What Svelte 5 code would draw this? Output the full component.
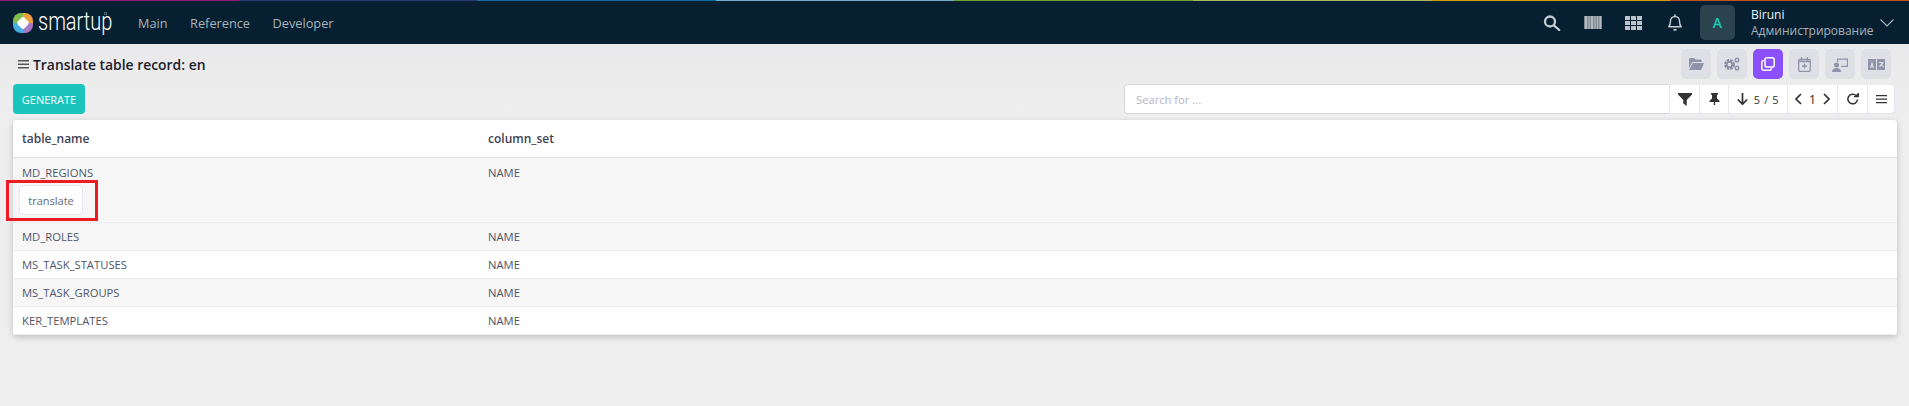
<script>
  const rows = [
    { t: 'MD_REGIONS', c: 'NAME', open: true, gray: true },
    { t: 'MD_ROLES', c: 'NAME', open: false, gray: true },
    { t: 'MS_TASK_STATUSES', c: 'NAME', open: false, gray: false },
    { t: 'MS_TASK_GROUPS', c: 'NAME', open: false, gray: true },
    { t: 'KER_TEMPLATES', c: 'NAME', open: false, gray: false }
  ];
</script>

<div class="page">
  <div class="rainbow"></div>
  <header class="nav">
    <div class="brand">
      <svg width="20" height="20" viewBox="0 0 20 20">
        <defs><clipPath id="squircle"><rect width="20" height="20" rx="8"/></clipPath></defs>
        <g clip-path="url(#squircle)">
          <path d="M0 0h10v10H0z" fill="#84bd4a"/>
          <path d="M10 0h10v10H10z" fill="#eea13a"/>
          <path d="M10 10h10v10H10z" fill="#a578c4"/>
          <path d="M0 10h10v10H0z" fill="#45aee3"/>
        </g>
        <rect x="5.200" y="5.200" width="9.600" height="9.600" rx="2.500" transform="rotate(45 10 10)" fill="#fff"/>
      </svg>
      <span class="wordmark">smartup</span>
      <svg class="reg" width="3" height="3" viewBox="0 0 3 3" fill="none" stroke="#aab2b9" stroke-width=".6"><circle cx="1.500" cy="1.500" r="1.200"/></svg>
    </div>
    <nav class="menu"><span>Main</span><span>Reference</span><span>Developer</span></nav>
    <div class="right">
      <svg class="ic i1" width="18" height="16" viewBox="0 0 18 16" fill="none" stroke="#c5ccd2" stroke-width="2.300"><circle cx="7" cy="6.500" r="5"/><path d="M10.800 10.300l5.400 4.700" stroke-linecap="round"/></svg>
      <svg class="ic i2" width="18" height="13" viewBox="0 0 18 13"><rect width="18" height="13" fill="#7f8a92"/><path fill="#b4bbc1" d="M1 0h2v13H1zM4.500 0h1v13h-1zM7 0h2v13H7zM10.500 0h1v13h-1zM13 0h1v13h-1zM15.500 0h1.500v13h-1.500z"/></svg>
      <svg class="ic i3" width="17" height="14" viewBox="0 0 17 14" fill="#bcc3c9"><path d="M0 0h5v4H0zM6 0h5v4H6zM12 0h5v4h-5zM0 5h5v4H0zM6 5h5v4H6zM12 5h5v4h-5zM0 10h5v4H0zM6 10h5v4H6zM12 10h5v4h-5z"/></svg>
      <svg class="ic i4" width="14" height="17" viewBox="0 0 14 17" fill="none" stroke="#c5ccd2" stroke-width="1.400"><path d="M.8 12.800c1.200-1.500 1.700-3 1.700-5.800a4.500 4.500 0 0 1 9 0c0 2.800.5 4.300 1.700 5.800z" stroke-linejoin="round"/><path d="M5.500 15.800h3" stroke-width="1.800"/><path d="M7 .2v2"/></svg>
      <div class="avatar">A</div>
      <div class="user"><div class="uname">Biruni</div><div class="urole">Администрирование</div></div>
      <svg class="chev" width="14" height="8" viewBox="0 0 14 8" fill="none" stroke="#aab2b9" stroke-width="1.100"><path d="M.5.500L7 7l6.500-6.500"/></svg>
    </div>
  </header>

  <main class="content">
    <div class="titlebar">
      <div class="title">
        <svg width="11" height="9" viewBox="0 0 11 9" fill="#555"><path d="M0 0h11v1.500H0zM0 3.500h11V5H0zM0 7h11v1.500H0z"/></svg>
        <span>Translate table record: en</span>
      </div>
      <div class="tools">
        <button class="tool" aria-label="folder"><svg width="15" height="12" viewBox="0 0 15 12" fill="#9094aa"><path d="M0 1.500C0 .7.600 0 1.300 0H5l1.500 1.500h5c.7 0 1.200.5 1.200 1.200V4H3.300L0 10z"/><path d="M3.800 5H15l-2.800 7H0z"/></svg></button>
        <button class="tool" aria-label="settings"><svg width="16" height="14" viewBox="0 0 16 14" fill="#9094aa"><circle cx="5.500" cy="7.500" r="3.800" fill="none" stroke="#8b8fa6" stroke-width="3.200" stroke-dasharray="2.200 .8"/><circle cx="5.500" cy="7.500" r="2.800" fill="none" stroke="#8b8fa6" stroke-width="1.600"/><circle cx="13" cy="3" r="1.800" fill="none" stroke="#9094aa" stroke-width="1.500"/><circle cx="13" cy="11" r="1.800" fill="none" stroke="#9094aa" stroke-width="1.500"/></svg></button>
        <button class="tool active" aria-label="copy"><svg width="14" height="14" viewBox="0 0 14 14" fill="none" stroke="#fff" stroke-width="1.500"><rect x="4" y=".8" width="9.200" height="9.200" rx="1.800"/><path d="M2.800 3.500A2 2 0 0 0 .8 5.500v5.700a2 2 0 0 0 2 2h5.700a2 2 0 0 0 2-2"/></svg></button>
        <button class="tool" aria-label="calendar"><svg width="13" height="15" viewBox="0 0 13 15" fill="none" stroke="#9094aa" stroke-width="1.300"><rect x=".7" y="2.500" width="11.600" height="11.800" rx="1"/><path d="M3.500 0v4M9.500 0v4M.7 4.500h11.600M6.500 6.500v5M4 9h5" /></svg></button>
        <button class="tool" aria-label="transfer"><svg width="17" height="15" viewBox="0 0 17 15" fill="#9094aa"><path d="M5 1.500h11v8.500H9V8.800h5.800V2.700H6.200V5H5z"/><circle cx="4.500" cy="8" r="2.500"/><path d="M0 15c0-3 2-4 4.500-4S9 12 9 15z"/></svg></button>
        <button class="tool" aria-label="translate"><svg width="17" height="11" viewBox="0 0 17 11" fill="#9094aa"><path fill-rule="evenodd" d="M0 0h8v11H0zM4 2L2 9h1.200l.3-1.300h1L4.800 9H6zM3.800 6.500h.4L4 5.200z"/><path fill-rule="evenodd" d="M9 0h8v11H9zM11 3v1h2.500l-2.500 3.500 .7.700 1.800-1.800 1.800 1.800.7-.7-2-2 1.500-1.500V3z"/></svg></button>
      </div>
    </div>

    <div class="actions">
      <button class="generate">GENERATE</button>
      <div class="search-wrap">
        <input class="search" placeholder="Search for ..." />
        <div class="bar">
          <button class="seg s1" aria-label="filter"><svg width="14" height="13" viewBox="0 0 14 13" fill="#333"><path d="M0 0h14v1.500L8.700 7v6L5.300 10.500V7L0 1.500z"/></svg></button>
          <button class="seg s2" aria-label="pin"><svg width="11" height="12" viewBox="0 0 11 12" fill="#333"><path d="M2 0h7v1.300L8 2v3.500l2.500 2.300V9H6.200v3h-1.400V9H.5V7.800L3 5.500V2L2 1.300z"/></svg></button>
          <div class="seg s3">
            <svg width="11" height="12" viewBox="0 0 11 12" fill="none" stroke="#333" stroke-width="1.700"><path d="M5.500 0v11M.8 6.500l4.700 4.700 4.700-4.700"/></svg>
            <span>5 / 5</span>
          </div>
          <div class="seg s4">
            <svg width="7" height="12" viewBox="0 0 7 12" fill="none" stroke="#333" stroke-width="1.700"><path d="M6 1L1 6l5 5"/></svg>
            <span>1</span>
            <svg width="7" height="12" viewBox="0 0 7 12" fill="none" stroke="#333" stroke-width="1.700"><path d="M1 1l5 5-5 5"/></svg>
          </div>
          <button class="seg s5" aria-label="reload"><svg width="12" height="12" viewBox="0 0 12 12" fill="none" stroke="#333" stroke-width="1.500"><path d="M10.500 6.500A4.800 4.800 0 1 1 9 2.500"/><path d="M7 3.700h4.300V0" stroke-width="1.200" fill="#333"/></svg></button>
          <button class="seg s6" aria-label="menu"><svg width="11" height="9" viewBox="0 0 11 9" fill="#333"><path d="M0 0h11v1.300H0zM0 3.500h11v1.300H0zM0 7h11v1.300H0z"/></svg></button>
        </div>
      </div>
    </div>

    <section class="card">
      <div class="row head"><div class="c1">table_name</div><div class="c2">column_set</div></div>
      {#each rows as r}
        <div class="row" class:gray={r.gray} class:open={r.open}>
          <div class="c1">{r.t}</div>
          <div class="c2">{r.c}</div>
          {#if r.open}
            <div class="rowact"><button class="translate">translate</button></div>
          {/if}
        </div>
      {/each}
      <div class="redbox"></div>
    </section>
  </main>
</div>

<style>
  :global(body) { margin: 0; background: #eeeeee; }
  .page { width: 1909px; height: 406px; overflow: hidden; font-family: "Open Sans", "Noto Sans", sans-serif; background: linear-gradient(180deg, #e9e9eb 44px, #eeeeee 110px); }
  .rainbow { height: 1px; background: linear-gradient(90deg, #8a1a75 0 12.5%, #2a3a70 12.5% 25%, #0f6e9e 25% 37.5%, #6fb0c8 37.5% 50%, #6fa030 50% 62.5%, #a6b85c 62.5% 75%, #c8a010 75% 87.5%, #c0541c 87.5% 100%); }
  .nav { height: 43px; background: #062032; display: flex; align-items: center; padding: 0 13px; }
  .brand { display: flex; align-items: center; width: 125px; position: relative; }
  .wordmark { color: #fff; font-size: 25px; font-family: "Roboto", sans-serif; font-weight: 300; line-height: 24px; margin-left: 5px; transform: scaleX(.8); transform-origin: left center; position: relative; top: -1px; }
  .reg { position: absolute; left: 91px; top: 1px; }
  .menu { display: flex; gap: 22.5px; color: #aab3ba; font-size: 12.75px; }
  .right { margin-left: auto; display: flex; align-items: center; }
  .i1 { margin-right: 23px; }
  .i2 { margin-right: 23px; }
  .i3 { margin-right: 26px; }
  .i4 { margin-right: 18px; }
  .avatar { width: 35px; height: 35px; background: #2c4350; border-radius: 5px; color: #1dc9b7; display: flex; align-items: center; justify-content: center; font-size: 14px; font-weight: 600; }
  .user { margin-left: 16px; line-height: 16px; width: 122px; white-space: nowrap; }
  .uname { color: #f2f4f5; font-size: 12px; }
  .urole { color: #aab2b9; font-size: 12px; }
  .chev { margin-left: 7px; margin-right: 2px; }
  .content { padding: 0 12px 0 13px; }
  .titlebar { display: flex; justify-content: space-between; align-items: center; height: 40px; }
  .title { display: flex; align-items: center; gap: 4px; padding-left: 5px; font-size: 13.9px; font-weight: 600; color: #1d1d2b; }
  .tools { display: flex; gap: 6px; margin-right: 6px; }
  .tool { width: 30px; height: 30px; border: 0; border-radius: 5px; background: #dfe0e6; display: flex; align-items: center; justify-content: center; padding: 0; }
  .tool.active { background: #8950fc; }
  .actions { display: flex; justify-content: space-between; align-items: center; height: 30px; margin-right: 2px; }
  .generate { width: 72px; height: 30px; border: 0; border-radius: 4px; background: #1bc5bd; color: #fff; font: 400 11px "Open Sans", sans-serif; padding: 0; }
  .search-wrap { display: flex; height: 30px; }
  .search { width: 545px; height: 30px; box-sizing: border-box; border: 1px solid #d5d8dc; border-right: 0; border-radius: 4px 0 0 4px; padding: 0 11px; font: 11.2px "Open Sans", sans-serif; background: #fff; outline: 0; }
  .search::placeholder { color: #b5b5c3; }
  .bar { display: flex; }
  .seg { box-sizing: border-box; height: 29px; margin-top: 1px; background: #fff; border: 0; border-left: 1px solid #e4e6ef; border-bottom: 1px solid #e4e6ef; display: flex; align-items: center; justify-content: center; padding: 0; color: #333; font-size: 12px; }
  .s1 { width: 30px; } .s2 { width: 29px; } .s3 { width: 59px; gap: 6px; font-size: 11px; letter-spacing: .6px; } .s4 { width: 50px; gap: 7px; font-size: 13px; } .s5 { width: 30px; } .s6 { width: 28px; border-right: 1px solid #e4e6ef; border-radius: 0 4px 4px 0; }
  .card { position: relative; margin-top: 6px; background: #fff; border-radius: 4px; box-shadow: 0 2px 6px rgba(0,0,0,.2); font-size: 11.25px; color: #50566a; }
  .row { display: grid; grid-template-columns: 466px 1fr; padding: 0 9px; height: 28px; align-items: center; border-bottom: 1px solid #ebedf3; box-sizing: border-box; }
  .row:last-of-type { border-bottom: 0; }
  .head { height: 38px; font-weight: 600; font-size: 12px; color: #3f4254; border-bottom: 1px solid #e0e0e0; box-shadow: 0 1px 2px rgba(0,0,0,.05); }
  .gray { background: #f6f6f6; }
  .open { height: 65px; grid-template-rows: 28px 1fr; align-items: start; padding-top: 7px; }
  .rowact { grid-column: 1 / 3; margin-left: -3px; margin-top: -8px; }
  .translate { width: 64px; height: 30px; box-sizing: border-box; background: #fff; border: 1px solid #e4e6ef; border-radius: 4px; color: #666a78; font: 11px "Open Sans", sans-serif; padding: 0; }
  .redbox { position: absolute; left: -7px; top: 60px; width: 92px; height: 41px; box-sizing: border-box; border: 3px solid #ed1c24; pointer-events: none; }
</style>
